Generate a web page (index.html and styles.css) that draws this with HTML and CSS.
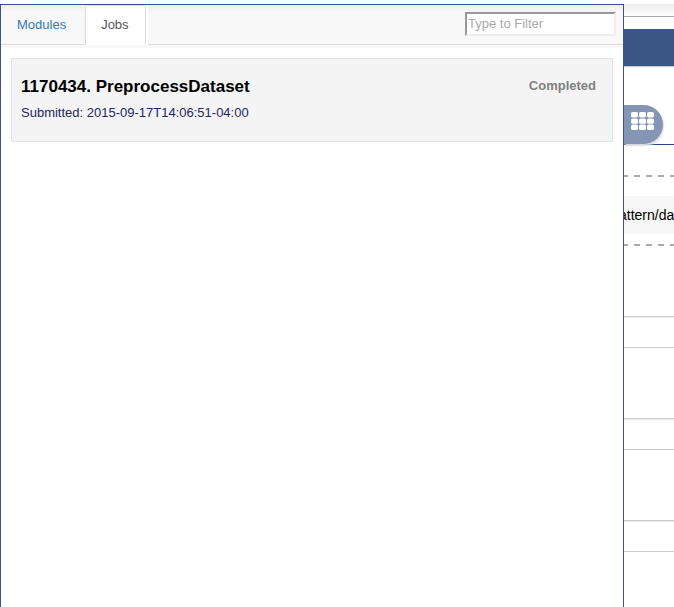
FILE: index.html
```html
<!DOCTYPE html>
<html lang="en">
<head>
<meta charset="utf-8">
<title>Jobs</title>
<link rel="stylesheet" href="styles.css">
</head>
<body>
<div class="layout">
  <aside class="panel">
    <header class="toolbar">
      <nav class="tabs">
        <a class="tab" href="#modules">Modules</a>
        <a class="tab active" href="#jobs" aria-current="page">Jobs</a>
      </nav>
      <div class="filter">
        <input type="text" placeholder="Type to Filter" aria-label="Type to Filter">
      </div>
    </header>
    <article class="job">
      <div class="job-info">
        <h2>1170434. PreprocessDataset</h2>
        <p>Submitted: 2015-09-17T14:06:51-04:00</p>
      </div>
      <strong class="status">Completed</strong>
    </article>
  </aside>
  <main class="page">
    <div class="topline"></div>
    <div class="banner"></div>
    <div class="handle-row">
      <button class="handle" type="button" aria-label="Toggle panel">
        <svg width="24" height="18" viewBox="0 0 24 18" fill="#fff">
          <rect x="0" y="0" width="7" height="5.4" rx="1.6"/><rect x="8" y="0" width="7" height="5.4" rx="1.6"/><rect x="16" y="0" width="7" height="5.4" rx="1.6"/>
          <rect x="0" y="6.4" width="7" height="5.4" rx="1.6"/><rect x="8" y="6.4" width="7" height="5.4" rx="1.6"/><rect x="16" y="6.4" width="7" height="5.4" rx="1.6"/>
          <rect x="0" y="12.6" width="7" height="5.4" rx="1.6"/><rect x="8" y="12.6" width="7" height="5.4" rx="1.6"/><rect x="16" y="12.6" width="7" height="5.4" rx="1.6"/>
        </svg>
      </button>
    </div>
    <div class="param"><p>attern/da</p></div>
    <section class="box"></section>
    <section class="box"></section>
    <section class="box"></section>
    <section class="box"></section>
  </main>
</div>
</body>
</html>
```
FILE: styles.css
```css
* { box-sizing: border-box; }

body {
  margin: 0;
  background: #fff;
  color: #000;
  font: 13px/20px "Liberation Sans", Arial, sans-serif;
}

h2, p { margin: 0; }

.layout {
  display: grid;
  grid-template-columns: minmax(0, 1fr) 50px;
  min-height: 100vh;
  padding-top: 4px;
}

.panel {
  border: 1px solid #3a5685;
  border-bottom: 0;
  background: #fff;
}

.toolbar {
  display: flex;
  height: 43px;
  padding-bottom: 3px;
  background: linear-gradient(#efefef, #f8f8f8 8px);
}

.tabs {
  display: flex;
  border-right: 2px solid #fff;
}

.tab {
  padding: 10px 19px 0 16px;
  border-bottom: 1px solid #ddd;
  color: #337ab7;
  text-decoration: none;
}

.tab.active {
  padding: 9px 16px 0 15px;
  border: 1px solid #ddd;
  border-bottom-color: #fff;
  border-radius: 2px 2px 0 0;
  background: #fff;
  color: #555;
}

.filter {
  display: flex;
  flex: 1;
  justify-content: flex-end;
  padding: 7px 7px 0 0;
  border-bottom: 1px solid #ddd;
}

.filter input {
  width: 151px;
  height: 24px;
  padding: 0 1px 2px;
  border: 2px solid;
  border-color: #999 #eee #eee #999;
  background: #fff;
  font: inherit;
}

.filter input::placeholder { color: #a9a9a9; }

.job {
  display: flex;
  justify-content: space-between;
  height: 84px;
  margin: 10px;
  padding: 16px 16px 0 9px;
  border: 1px solid #e3e3e3;
  border-radius: 2px;
  background: #f4f4f4;
}

.job h2 {
  font-size: 17px;
  line-height: 24px;
}

.job p {
  padding-top: 4px;
  color: #252560;
}

.status {
  color: #808080;
  line-height: 22px;
}

.page { overflow: hidden; }

.topline {
  height: 13px;
  border-bottom: 1px solid #aaa;
  background: linear-gradient(#ebebeb, #fff);
}

.banner {
  height: 37px;
  margin-top: 12px;
  background: #3a5685;
  box-shadow: 0 1px 1px #ccc;
}

.handle-row {
  height: 40px;
  margin-top: 39px;
  border-bottom: 1px solid #254682;
}

.handle {
  display: block;
  width: 39px;
  height: 39px;
  padding: 7px 7px 14px;
  border: 0;
  border-radius: 0 20px 20px 0;
  background: #8495b5;
  box-shadow: 1px 2px 2px #ddd;
}

.handle svg { display: block; }

.param {
  margin-top: 30px;
  padding: 21px 0 12px;
  background:
    repeating-linear-gradient(90deg, #aaa 0 6px, transparent 6px 12px) -2px 0 / 60px 2px repeat-x,
    repeating-linear-gradient(90deg, #aaa 0 6px, transparent 6px 12px) -2px 100% / 60px 2px repeat-x;
}

.param p {
  padding: 9px 0;
  background: #f6f6f6;
  font-size: 14px;
  text-indent: -5px;
  white-space: nowrap;
}

.box {
  height: 72px;
  margin-bottom: 30px;
  border: solid #ccc;
  border-width: 1px 0;
  box-shadow: 0 1px 1px #eee;
}

.param + .box {
  height: 71px;
  border-top: 0;
}

.box:last-child {
  height: 56px;
  margin-bottom: 0;
  border-bottom: 0;
  box-shadow: none;
}
```
